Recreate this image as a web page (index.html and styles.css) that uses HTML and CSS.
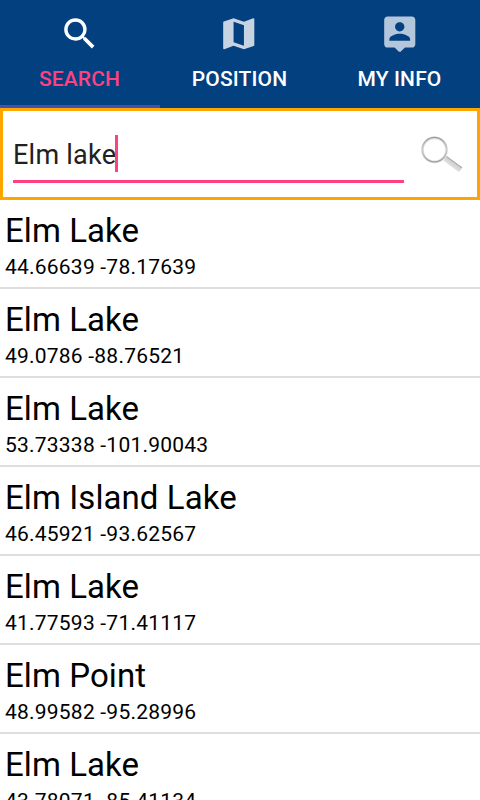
FILE: index.html
```html
<!DOCTYPE html>
<html lang="en">
<head>
<meta charset="utf-8">
<title>Search</title>
<link rel="stylesheet" href="styles.css">
</head>
<body>
<nav class="tabs">
  <a class="tab active">
    <svg class="icon glass" viewBox="0 0 24 24"><path d="M15.5 14h-.79l-.28-.27A6.47 6.47 0 0 0 16 9.5 6.5 6.5 0 1 0 9.5 16c1.61 0 3.09-.59 4.23-1.57l.27.28v.79l5 4.99L20.49 19l-4.99-5zm-6 0C7.01 14 5 11.99 5 9.5S7.01 5 9.5 5 14 7.01 14 9.5 11.99 14 9.5 14z"/></svg>
    <span>SEARCH</span>
  </a>
  <a class="tab">
    <svg class="icon map" viewBox="0 0 24 24"><path d="M20.5 3l-.16.03L15 5.1 9 3 3.36 4.9c-.21.07-.36.25-.36.48V20.5c0 .28.22.5.5.5l.16-.03L9 18.9l6 2.1 5.64-1.9c.21-.07.36-.25.36-.48V3.5c0-.28-.22-.5-.5-.5zM15 19l-6-2.11V5l6 2.11V19z"/></svg>
    <span>POSITION</span>
  </a>
  <a class="tab">
    <svg class="icon person" viewBox="0 0 24 24"><path d="M19 2H5c-1.11 0-2 .9-2 2v14c0 1.1.89 2 2 2h4l2.5 2.4h1L15 20h4c1.1 0 2-.9 2-2V4c0-1.1-.9-2-2-2zm-7 3.3c1.49 0 2.7 1.21 2.7 2.7s-1.21 2.7-2.7 2.7S9.3 9.49 9.3 8s1.21-2.7 2.7-2.7zM18 16H6v-.9c0-2 4-3.1 6-3.1s6 1.1 6 3.1v.9z"/></svg>
    <span>MY INFO</span>
  </a>
</nav>
<form class="search">
  <div class="field"><span class="query">Elm lake</span><span class="caret"></span></div>
  <svg class="lens" width="46" height="40" viewBox="0 0 46 40">
    <defs>
      <linearGradient id="rim" x1="0" y1="0" x2="0" y2="1"><stop offset="0" stop-color="#999"/><stop offset=".5" stop-color="#cdcdcd"/><stop offset="1" stop-color="#a0a0a0"/></linearGradient>
      <linearGradient id="grip" x1="0" y1="0" x2="0" y2="1"><stop offset="0" stop-color="#999"/><stop offset=".3" stop-color="#d2d2d2"/><stop offset="1" stop-color="#e0e0e0"/></linearGradient>
    </defs>
    <circle cx="14.5" cy="13.9" r="12" fill="none" stroke="#dcdcdc" stroke-width="2.6"/>
    <circle cx="14.5" cy="13.6" r="12.2" fill="none" stroke="url(#rim)" stroke-width="1.3"/>
    <g transform="translate(25 22.3) rotate(36)"><rect width="19.5" height="5.8" y="-2.9" rx=".8" fill="url(#grip)"/></g>
  </svg>
</form>
<ul class="results">
  <li><h2>Elm Lake</h2><p>44.66639 -78.17639</p></li>
  <li><h2>Elm Lake</h2><p>49.0786 -88.76521</p></li>
  <li><h2>Elm Lake</h2><p>53.73338 -101.90043</p></li>
  <li><h2>Elm Island Lake</h2><p>46.45921 -93.62567</p></li>
  <li><h2>Elm Lake</h2><p>41.77593 -71.41117</p></li>
  <li><h2>Elm Point</h2><p>48.99582 -95.28996</p></li>
  <li><h2>Elm Lake</h2><p>43.78071 -85.41134</p></li>
</ul>
</body>
</html>
```

FILE: styles.css
```css
* { box-sizing: border-box; }
html, body { margin: 0; height: 800px; overflow: hidden; }
body { background: #fff; color: #000; font-family: Roboto, "Liberation Sans", sans-serif; }
.tabs { display: grid; grid-template-columns: repeat(3, 160px); height: 108px; background: #03407f; }
.tab { display: flex; flex-direction: column; align-items: center; padding-top: 12.5px; color: #fff; border-bottom: 3px solid transparent; font-size: 21px; font-weight: 500; line-height: 25px; letter-spacing: .13px; }
.tab.active { color: #ff4081; border-bottom-color: #3f51b5; }
.tab span { margin: 12.5px 1px 0 0; }
.icon { width: 41.5px; height: 41.5px; fill: #fff; }
.glass { margin-left: -1px; }
.map { fill: #c6d3e1; margin-left: -2px; }
.person { fill: #b3c6db; }
.search { display: flex; height: 92px; margin: 0; border: 3px solid #ffa500; padding-left: 10px; }
.field { display: flex; width: 391px; height: 72px; border-bottom: 3px solid #ff4081; padding-top: 24px; color: #212121; font-size: 27px; line-height: 41px; letter-spacing: .25px; }
.query { white-space: pre; width: 102px; }
.caret { width: 3px; height: 37px; background: #ff4081; }
.lens { margin: 25px 0 0 16px; }
.results { list-style: none; margin: 0; padding: 0; }
.results li { height: 89px; padding: 11px 5px 0; border-bottom: 2px solid #dedede; }
h2 { margin: 0; font-size: 33px; font-weight: 400; line-height: 39px; letter-spacing: .08px; }
p { margin: 5px 0 0; font-size: 21px; line-height: 25px; letter-spacing: .22px; }
```
